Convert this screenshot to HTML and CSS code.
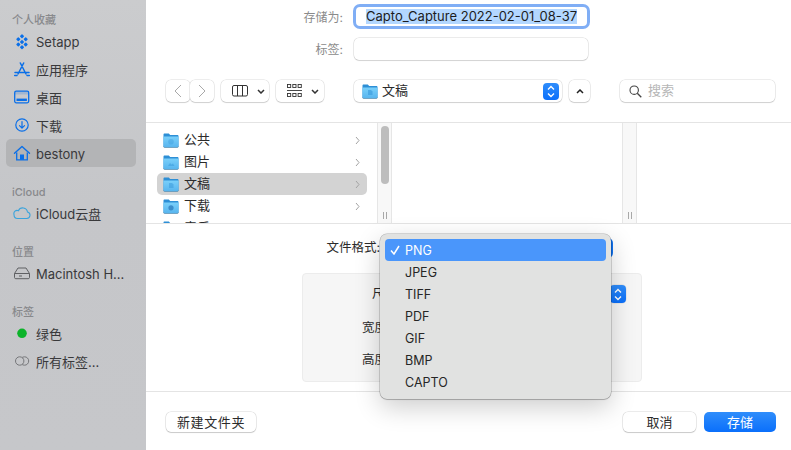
FILE: index.html
```html
<!DOCTYPE html>
<html lang="zh-CN">
<head>
<meta charset="utf-8">
<title>存储</title>
<link rel="stylesheet" href="styles.css">
</head>
<body>
<svg class="defs" width="0" height="0" aria-hidden="true">
  <defs>
    <linearGradient id="fold" x1="0" y1="0" x2="0" y2="1">
      <stop offset="0" stop-color="#7ad0fa"/><stop offset="1" stop-color="#57b4ee"/>
    </linearGradient>
    <symbol id="folder" viewBox="0 0 16 15">
      <path d="M1.600 0.500h4.200l1.400 1.500h7.200c.7 0 1.100.4 1.100 1.100v10c0 .8-.4 1.400-1.200 1.400H1.700C.9 14.500.5 13.900.5 13.100V1.700C.5 1 .9.5 1.600.5z" fill="#2d8fd6"/>
      <path d="M.5 4.200c0-.5.3-.8.8-.8h13.400c.5 0 .8.300.8.800v8.900c0 .8-.4 1.400-1.200 1.400H1.700c-.8 0-1.200-.6-1.200-1.400z" fill="url(#fold)"/>
      <path d="M.5 13.300c0 .8.400 1.200 1.200 1.200h12.600c.8 0 1.200-.4 1.200-1.200" fill="none" stroke="#6f8a9c" stroke-width=".5"/>
    </symbol>
  </defs>
</svg>
<div class="app">
  <aside class="sidebar">
    <section class="side-section">
      <h2 class="side-title">个人收藏</h2>
      <div class="side-row"><svg class="side-icon" viewBox="0 0 18 18"><g fill="#0a6fe8"><rect x="7.400" y="2.700" width="3.200" height="3.200" rx=".7" transform="rotate(45 9 4.300)"/><rect x="3.700" y="5.700" width="3.200" height="3.200" rx=".7" transform="rotate(45 5.300 7.300)"/><rect x="11.100" y="5.700" width="3.200" height="3.200" rx=".7" transform="rotate(45 12.700 7.300)"/><rect x="7.400" y="8.300" width="3.200" height="3.200" rx=".7" transform="rotate(45 9 9.900)"/><rect x="3.700" y="10.900" width="3.200" height="3.200" rx=".7" transform="rotate(45 5.300 12.500)"/><rect x="11.100" y="10.900" width="3.200" height="3.200" rx=".7" transform="rotate(45 12.700 12.500)"/><rect x="7.400" y="13.700" width="3.200" height="3.200" rx=".7" transform="rotate(45 9 15.300)"/></g></svg><span>Setapp</span></div>
      <div class="side-row"><svg class="side-icon" viewBox="0 0 18 18"><path d="M10.700 3 5 14M7.300 3 13 14M2 12.500h14M1.700 15.500h2.300M14 15.500h2.300" fill="none" stroke="#0a6fe8" stroke-width="1.500" stroke-linecap="round"/></svg><span>应用程序</span></div>
      <div class="side-row"><svg class="side-icon" viewBox="0 0 18 18"><rect x="1.700" y="3.200" width="14" height="11.600" rx="1.500" fill="none" stroke="#0a6fe8" stroke-width="1.300"/><rect x="2" y="3.500" width="13.400" height="3" fill="#0a6fe8" fill-opacity=".2"/><rect x="3.500" y="10.600" width="10.400" height="2.400" fill="#0a6fe8"/></svg><span>桌面</span></div>
      <div class="side-row"><svg class="side-icon" viewBox="0 0 18 18"><circle cx="9" cy="9" r="6.200" fill="none" stroke="#0a6fe8" stroke-width="1.200"/><path d="M9 5.500v6.500M6.500 9.600 9 12.100l2.500-2.500" fill="none" stroke="#0a6fe8" stroke-width="1.200" stroke-linecap="round" stroke-linejoin="round"/></svg><span>下载</span></div>
      <div class="side-row is-active"><svg class="side-icon" viewBox="0 0 18 18"><path d="M1.500 9.200 9 2.500l7.500 6.700" fill="none" stroke="#0a6fe8" stroke-width="1.400" stroke-linecap="round" stroke-linejoin="round"/><path d="M3.700 8.500v7.300h10.600V8.500" fill="none" stroke="#0a6fe8" stroke-width="1.300"/><rect x="7" y="10.500" width="4" height="5.300" fill="#0a6fe8"/></svg><span>bestony</span></div>
    </section>
    <section class="side-section">
      <h2 class="side-title">iCloud</h2>
      <div class="side-row"><svg class="side-icon" viewBox="0 0 18 18"><path d="M4.500 14.500h9.300a3.300 3.300 0 0 0 .7-6.500 4.800 4.800 0 0 0-9.100-1.300A3.200 3.200 0 0 0 1 10.500c0 2.300 1.500 4 3.500 4z" fill="none" stroke="#3aa3dc" stroke-width="1.100"/></svg><span>iCloud云盘</span></div>
    </section>
    <section class="side-section">
      <h2 class="side-title">位置</h2>
      <div class="side-row"><svg class="side-icon" viewBox="0 0 18 18"><path d="M5 4h8l3.500 5.500v4c0 .8-.6 1.200-1.300 1.200H2.800c-.7 0-1.300-.4-1.300-1.200v-4zM1.500 9.500h15" fill="none" stroke="#5f6063" stroke-width="1"/><path d="M6 12h3" stroke="#5f6063" stroke-width="1"/></svg><span>Macintosh H...</span></div>
    </section>
    <section class="side-section">
      <h2 class="side-title">标签</h2>
      <div class="side-row"><svg class="side-icon" viewBox="0 0 18 18"><circle cx="9" cy="9.300" r="4.800" fill="#0cb32a"/></svg><span>绿色</span></div>
      <div class="side-row"><svg class="side-icon" viewBox="0 0 18 18"><circle cx="11.500" cy="9" r="4.200" fill="none" stroke="#76777a" stroke-width="1"/><circle cx="6.700" cy="9" r="4.200" fill="#c6c7ca" stroke="#76777a" stroke-width="1"/></svg><span>所有标签...</span></div>
    </section>
  </aside>

  <main class="main">
    <div class="form-row form-row-first">
      <label class="form-label">存储为:</label>
      <div class="name-field"><span class="selected-text">Capto_Capture 2022-02-01_08-37</span></div>
    </div>
    <div class="form-row form-row-second">
      <label class="form-label">标签:</label>
      <div class="tag-field"></div>
    </div>

    <div class="toolbar">
      <div class="btn-pair">
        <div class="tool-btn nav-btn"><svg width="8" height="14" viewBox="0 0 8 14"><path d="M7 1 1 7l6 6" fill="none" stroke="#a9a9a9" stroke-width="1"/></svg></div>
        <div class="tool-btn nav-btn"><svg width="8" height="14" viewBox="0 0 8 14"><path d="m1 1 6 6-6 6" fill="none" stroke="#a9a9a9" stroke-width="1"/></svg></div>
      </div>
      <div class="tool-btn view-btn">
        <svg width="16" height="12" viewBox="0 0 16 12"><rect x=".5" y=".5" width="15" height="10.500" rx="1.500" fill="none" stroke="#333" stroke-width="1"/><path d="M5.500 1v10M10.500 1v10" stroke="#333" stroke-width="1"/></svg>
        <svg class="chev" width="8" height="5" viewBox="0 0 8 5"><path d="m1 1 3 3 3-3" fill="none" stroke="#333" stroke-width="1.500"/></svg>
      </div>
      <div class="tool-btn view-btn">
        <svg width="15" height="14" viewBox="0 0 15 14"><g fill="none" stroke="#333" stroke-width=".9"><rect x=".5" y=".5" width="3.200" height="3"/><rect x="5.800" y=".5" width="3.200" height="3"/><rect x="11.100" y=".5" width="3.200" height="3"/><rect x=".5" y="9.500" width="3.200" height="3"/><rect x="5.800" y="9.500" width="3.200" height="3"/><rect x="11.100" y="9.500" width="3.200" height="3"/><path d="M0 6.500h15"/></g></svg>
        <svg class="chev" width="8" height="5" viewBox="0 0 8 5"><path d="m1 1 3 3 3-3" fill="none" stroke="#333" stroke-width="1.500"/></svg>
      </div>
      <div class="tool-btn path-btn">
        <svg class="folder-icon" viewBox="0 0 16 15"><use href="#folder"/><path d="M6 6h3l1.500 1.500v3.500H6z" fill="#3f9ede" fill-opacity=".7"/></svg>
        <span class="path-text">文稿</span>
        <span class="stepper"><svg width="8" height="13" viewBox="0 0 8 13"><path d="m1 4.500 3-3 3 3M1 8.500l3 3 3-3" fill="none" stroke="#fff" stroke-width="1.400"/></svg></span>
      </div>
      <div class="tool-btn up-btn"><svg width="8" height="5" viewBox="0 0 8 5"><path d="m1 4 3-3 3 3" fill="none" stroke="#222" stroke-width="1.500"/></svg></div>
      <div class="tool-btn search-box">
        <svg width="13" height="13" viewBox="0 0 13 13"><circle cx="5.200" cy="5.200" r="4.200" fill="none" stroke="#444" stroke-width="1.100"/><path d="m8.300 8.300 4 4" stroke="#444" stroke-width="1.300"/></svg>
        <span class="search-text">搜索</span>
      </div>
    </div>

    <div class="browser">
      <div class="column column-list">
        <div class="file-row"><svg class="folder-icon" viewBox="0 0 16 15"><use href="#folder"/><circle cx="8" cy="8.800" r="2.800" fill="#3f9ede" fill-opacity=".45"/></svg><span class="file-name">公共</span><svg class="row-chev" width="5" height="9" viewBox="0 0 5 9"><path d="m1 1 3 3.500L1 8" fill="none" stroke="#a3a3a3" stroke-width="1"/></svg></div>
        <div class="file-row"><svg class="folder-icon" viewBox="0 0 16 15"><use href="#folder"/><path d="M5 11 7 8l1.500 1.500L10 8.500l1.500 2.500z" fill="#3f9ede" fill-opacity=".6"/></svg><span class="file-name">图片</span><svg class="row-chev" width="5" height="9" viewBox="0 0 5 9"><path d="m1 1 3 3.500L1 8" fill="none" stroke="#a3a3a3" stroke-width="1"/></svg></div>
        <div class="file-row is-selected"><svg class="folder-icon" viewBox="0 0 16 15"><use href="#folder"/><path d="M6 6h3l1.500 1.500v3.500H6z" fill="#3f9ede" fill-opacity=".6"/></svg><span class="file-name">文稿</span><svg class="row-chev" width="5" height="9" viewBox="0 0 5 9"><path d="m1 1 3 3.500L1 8" fill="none" stroke="#a3a3a3" stroke-width="1"/></svg></div>
        <div class="file-row"><svg class="folder-icon" viewBox="0 0 16 15"><use href="#folder"/><circle cx="8" cy="8.800" r="2.600" fill="#2f7fc0" fill-opacity=".8"/></svg><span class="file-name">下载</span><svg class="row-chev" width="5" height="9" viewBox="0 0 5 9"><path d="m1 1 3 3.500L1 8" fill="none" stroke="#a3a3a3" stroke-width="1"/></svg></div>
        <div class="file-row"><svg class="folder-icon" viewBox="0 0 16 15"><use href="#folder"/></svg><span class="file-name">音乐</span><svg class="row-chev" width="5" height="9" viewBox="0 0 5 9"><path d="m1 1 3 3.500L1 8" fill="none" stroke="#a3a3a3" stroke-width="1"/></svg></div>
      </div>
      <div class="strip"><div class="thumb"></div><div class="grip"></div></div>
      <div class="column column-empty"></div>
      <div class="strip"><div class="grip"></div></div>
      <div class="column column-rest"></div>
    </div>

    <div class="format-row">
      <label class="format-label">文件格式:</label>
      <div class="format-popup"></div>
    </div>

    <div class="panel">
      <div class="panel-row"><label class="panel-label panel-label-size">尺寸:</label><span class="stepper panel-stepper"><svg width="8" height="13" viewBox="0 0 8 13"><path d="m1 4.500 3-3 3 3M1 8.500l3 3 3-3" fill="none" stroke="#fff" stroke-width="1.400"/></svg></span></div>
      <div class="panel-row panel-row-w"><label class="panel-label">宽度:</label></div>
      <div class="panel-row panel-row-h"><label class="panel-label">高度:</label></div>
    </div>

    <footer class="footer">
      <button class="btn btn-new">新建文件夹</button>
      <div class="footer-right">
        <button class="btn btn-cancel">取消</button>
        <button class="btn btn-save">存储</button>
      </div>
    </footer>
  </main>
</div>

<div class="menu">
  <div class="menu-item is-current"><svg class="check" width="10" height="10" viewBox="0 0 10 10"><path d="M1 5.500 4 9l5-8" fill="none" stroke="#fff" stroke-width="1.500"/></svg>PNG</div>
  <div class="menu-item">JPEG</div>
  <div class="menu-item">TIFF</div>
  <div class="menu-item">PDF</div>
  <div class="menu-item">GIF</div>
  <div class="menu-item">BMP</div>
  <div class="menu-item">CAPTO</div>
</div>
</body>
</html>
```
FILE: styles.css
```css
* { box-sizing: border-box; }
html, body {
  margin: 0;
  width: 791px;
  height: 450px;
  overflow: hidden;
  background: #fff;
  font-family: Inter, "Noto Sans CJK SC", "Liberation Sans", sans-serif;
  color: #2b2b2b;
}
body { position: relative; }
.defs { position: absolute; }
.app { display: flex; height: 450px; }

/* Sidebar */
.sidebar {
  width: 146px;
  flex: none;
  padding: 11px 10px 0 6px;
  background: linear-gradient(#cbccce, #c5c6c9 45%, #c6c7ca);
}
.side-section + .side-section { margin-top: 16px; }
.side-title {
  margin: 0;
  padding: 1px 0 0 6px;
  height: 16px;
  line-height: 16px;
  font-size: 11px;
  font-weight: 500;
  color: #88898c;
}
.side-row {
  display: flex;
  align-items: center;
  height: 28px;
  padding-left: 7px;
  font-size: 13px;
  line-height: 16px;
  color: #39393b;
  border-radius: 5px;
}
.side-row span { margin-top: 2px; }
.side-row.is-active { background: #b3b4b6; }
.side-icon { width: 18px; height: 18px; margin-right: 5px; flex: none; }

/* Main */
.main { width: 645px; flex: none; }
.form-row { display: flex; align-items: center; }
.form-row-first { padding-top: 4px; height: 29px; }
.form-row-second { margin-top: 9px; height: 22px; }
.form-label {
  width: 197px;
  padding-top: 2px;
  text-align: right;
  font-size: 12px;
  line-height: 16px;
  color: #8a8a8a;
  margin-right: 10px;
}
.name-field {
  width: 237px;
  height: 25px;
  border: 3px solid #80aef5;
  border-radius: 7px;
  padding: 0 0 0 10px;
  display: flex;
  align-items: center;
  background: #fff;
}
.selected-text {
  background: #b3d7ff;
  color: #1c1c1c;
  font-size: 13px;
  line-height: 15px;
  white-space: nowrap;
}
.tag-field {
  width: 234px;
  height: 22px;
  margin-left: 1px;
  border-radius: 5px;
  background: #fff;
  box-shadow: 0 0 0 .5px rgba(0,0,0,.16), 0 1px 1px rgba(0,0,0,.1);
}

/* Toolbar */
.toolbar {
  display: flex;
  align-items: stretch;
  height: 22px;
  margin-top: 20px;
  padding-left: 20px;
}
.btn-pair { display: flex; }
.tool-btn {
  display: flex;
  align-items: center;
  background: #fff;
  border-radius: 5px;
  line-height: 16px;
  box-shadow: 0 0 0 .5px rgba(0,0,0,.14), 0 1px 1px rgba(0,0,0,.12);
}
.nav-btn { width: 24px; justify-content: center; }
.view-btn { width: 48px; margin-left: 7px; padding-left: 11px; }
.chev { margin-left: 9px; }
.path-btn { width: 208px; margin-left: 30px; padding-left: 8px; }
.folder-icon { width: 16px; height: 15px; flex: none; }
.path-text { font-size: 13px; margin: 0 0 2px 4px; flex: 1; }
.stepper {
  width: 16px;
  height: 17px;
  margin-right: 3px;
  border-radius: 4px;
  background: linear-gradient(#2f8dfb, #0a6ffb);
  display: flex;
  align-items: center;
  justify-content: center;
  flex: none;
}
.up-btn { width: 21px; margin-left: 7px; justify-content: center; }
.search-box { width: 155px; margin-left: 30px; padding-left: 9px; }
.search-text { font-size: 13px; color: #b6b6b6; margin: 0 0 2px 6px; }

/* Browser */
.browser {
  display: flex;
  height: 102px;
  margin-top: 20px;
  border-top: 1px solid #e4e4e4;
  border-bottom: 1px solid #e4e4e4;
  overflow: hidden;
}
.column-list { width: 231px; padding: 6px 10px 0 11px; flex: none; }
.file-row {
  display: flex;
  align-items: center;
  height: 22px;
  padding: 0 7px 0 6px;
  border-radius: 5px;
  font-size: 13px;
  line-height: 16px;
  color: #2b2b2b;
}
.file-row.is-selected { background: #d3d3d3; }
.file-name { margin: 0 0 2px 5px; flex: 1; }
.strip {
  width: 15px;
  flex: none;
  position: relative;
  background: #f8f8f8;
  border-left: 1px solid #e6e6e6;
  border-right: 1px solid #e6e6e6;
}
.thumb {
  position: absolute;
  left: 3px;
  top: 3px;
  width: 8px;
  height: 58px;
  border-radius: 4px;
  background: #bdbdbd;
}
.grip {
  position: absolute;
  left: 5px;
  bottom: 4px;
  width: 4px;
  height: 7px;
  border-left: 1px solid #a8a8a8;
  border-right: 1px solid #a8a8a8;
}
.column-empty { width: 230px; flex: none; }
.column-rest { flex: 1; }

/* Format row */
.format-row { display: flex; align-items: center; height: 20px; margin-top: 14px; }
.format-label { width: 234px; text-align: right; font-size: 12.500px; line-height: 16px; color: #2b2b2b; }
.format-popup { width: 233px; height: 20px; border-radius: 5px; background: #0f72f0; }

/* Panel */
.panel {
  width: 340px;
  height: 109px;
  margin: 15px 0 0 156px;
  padding-top: 11px;
  background: #f6f6f6;
  border: 1px solid #ececec;
  border-radius: 4px;
}
.panel-row { display: flex; align-items: center; justify-content: space-between; height: 18px; }
.panel-row-w { margin-top: 16px; }
.panel-row-h { margin-top: 14px; }
.panel-label { font-size: 12.500px; line-height: 16px; color: #2b2b2b; margin-left: 59px; }
.panel-label-size { margin-left: 69px; }
.panel-stepper { margin-right: 15px; height: 18px; box-shadow: 0 0 0 .5px rgba(0,0,0,.1); }

/* Footer */
.footer {
  display: flex;
  justify-content: space-between;
  margin-top: 9px;
  padding: 20px 15px 0 20px;
  border-top: 1px solid #e4e4e4;
}
.footer-right { display: flex; gap: 8px; }
.btn {
  height: 20px;
  padding: 0;
  border: 0;
  border-radius: 5px;
  font: inherit;
  font-size: 13px;
  line-height: 16px;
  color: #2b2b2b;
  background: #fff;
  box-shadow: 0 0 0 .5px rgba(0,0,0,.16), 0 1px 1px rgba(0,0,0,.14);
}
.btn-new { width: 90px; letter-spacing: .6px; }
.btn-cancel { width: 73px; }
.btn-save {
  width: 72px;
  color: #fff;
  background: linear-gradient(#2f8dfb, #0a6ffb);
  box-shadow: none;
}

/* Popup menu */
.menu {
  position: absolute;
  left: 380px;
  top: 234px;
  width: 231px;
  height: 165px;
  padding: 5px;
  border-radius: 7px;
  background: #e1e2e1;
  box-shadow: 0 0 0 .5px rgba(0,0,0,.28), 0 1px 1px rgba(0,0,0,.15), 0 8px 26px rgba(0,0,0,.2);
}
.menu-item {
  position: relative;
  height: 22px;
  line-height: 23px;
  padding-left: 20px;
  font-size: 12.500px;
  color: #262626;
  border-radius: 4px;
}
.menu-item.is-current { background: #4a96fb; color: #fff; }
.check { position: absolute; left: 5px; top: 6px; }
```
